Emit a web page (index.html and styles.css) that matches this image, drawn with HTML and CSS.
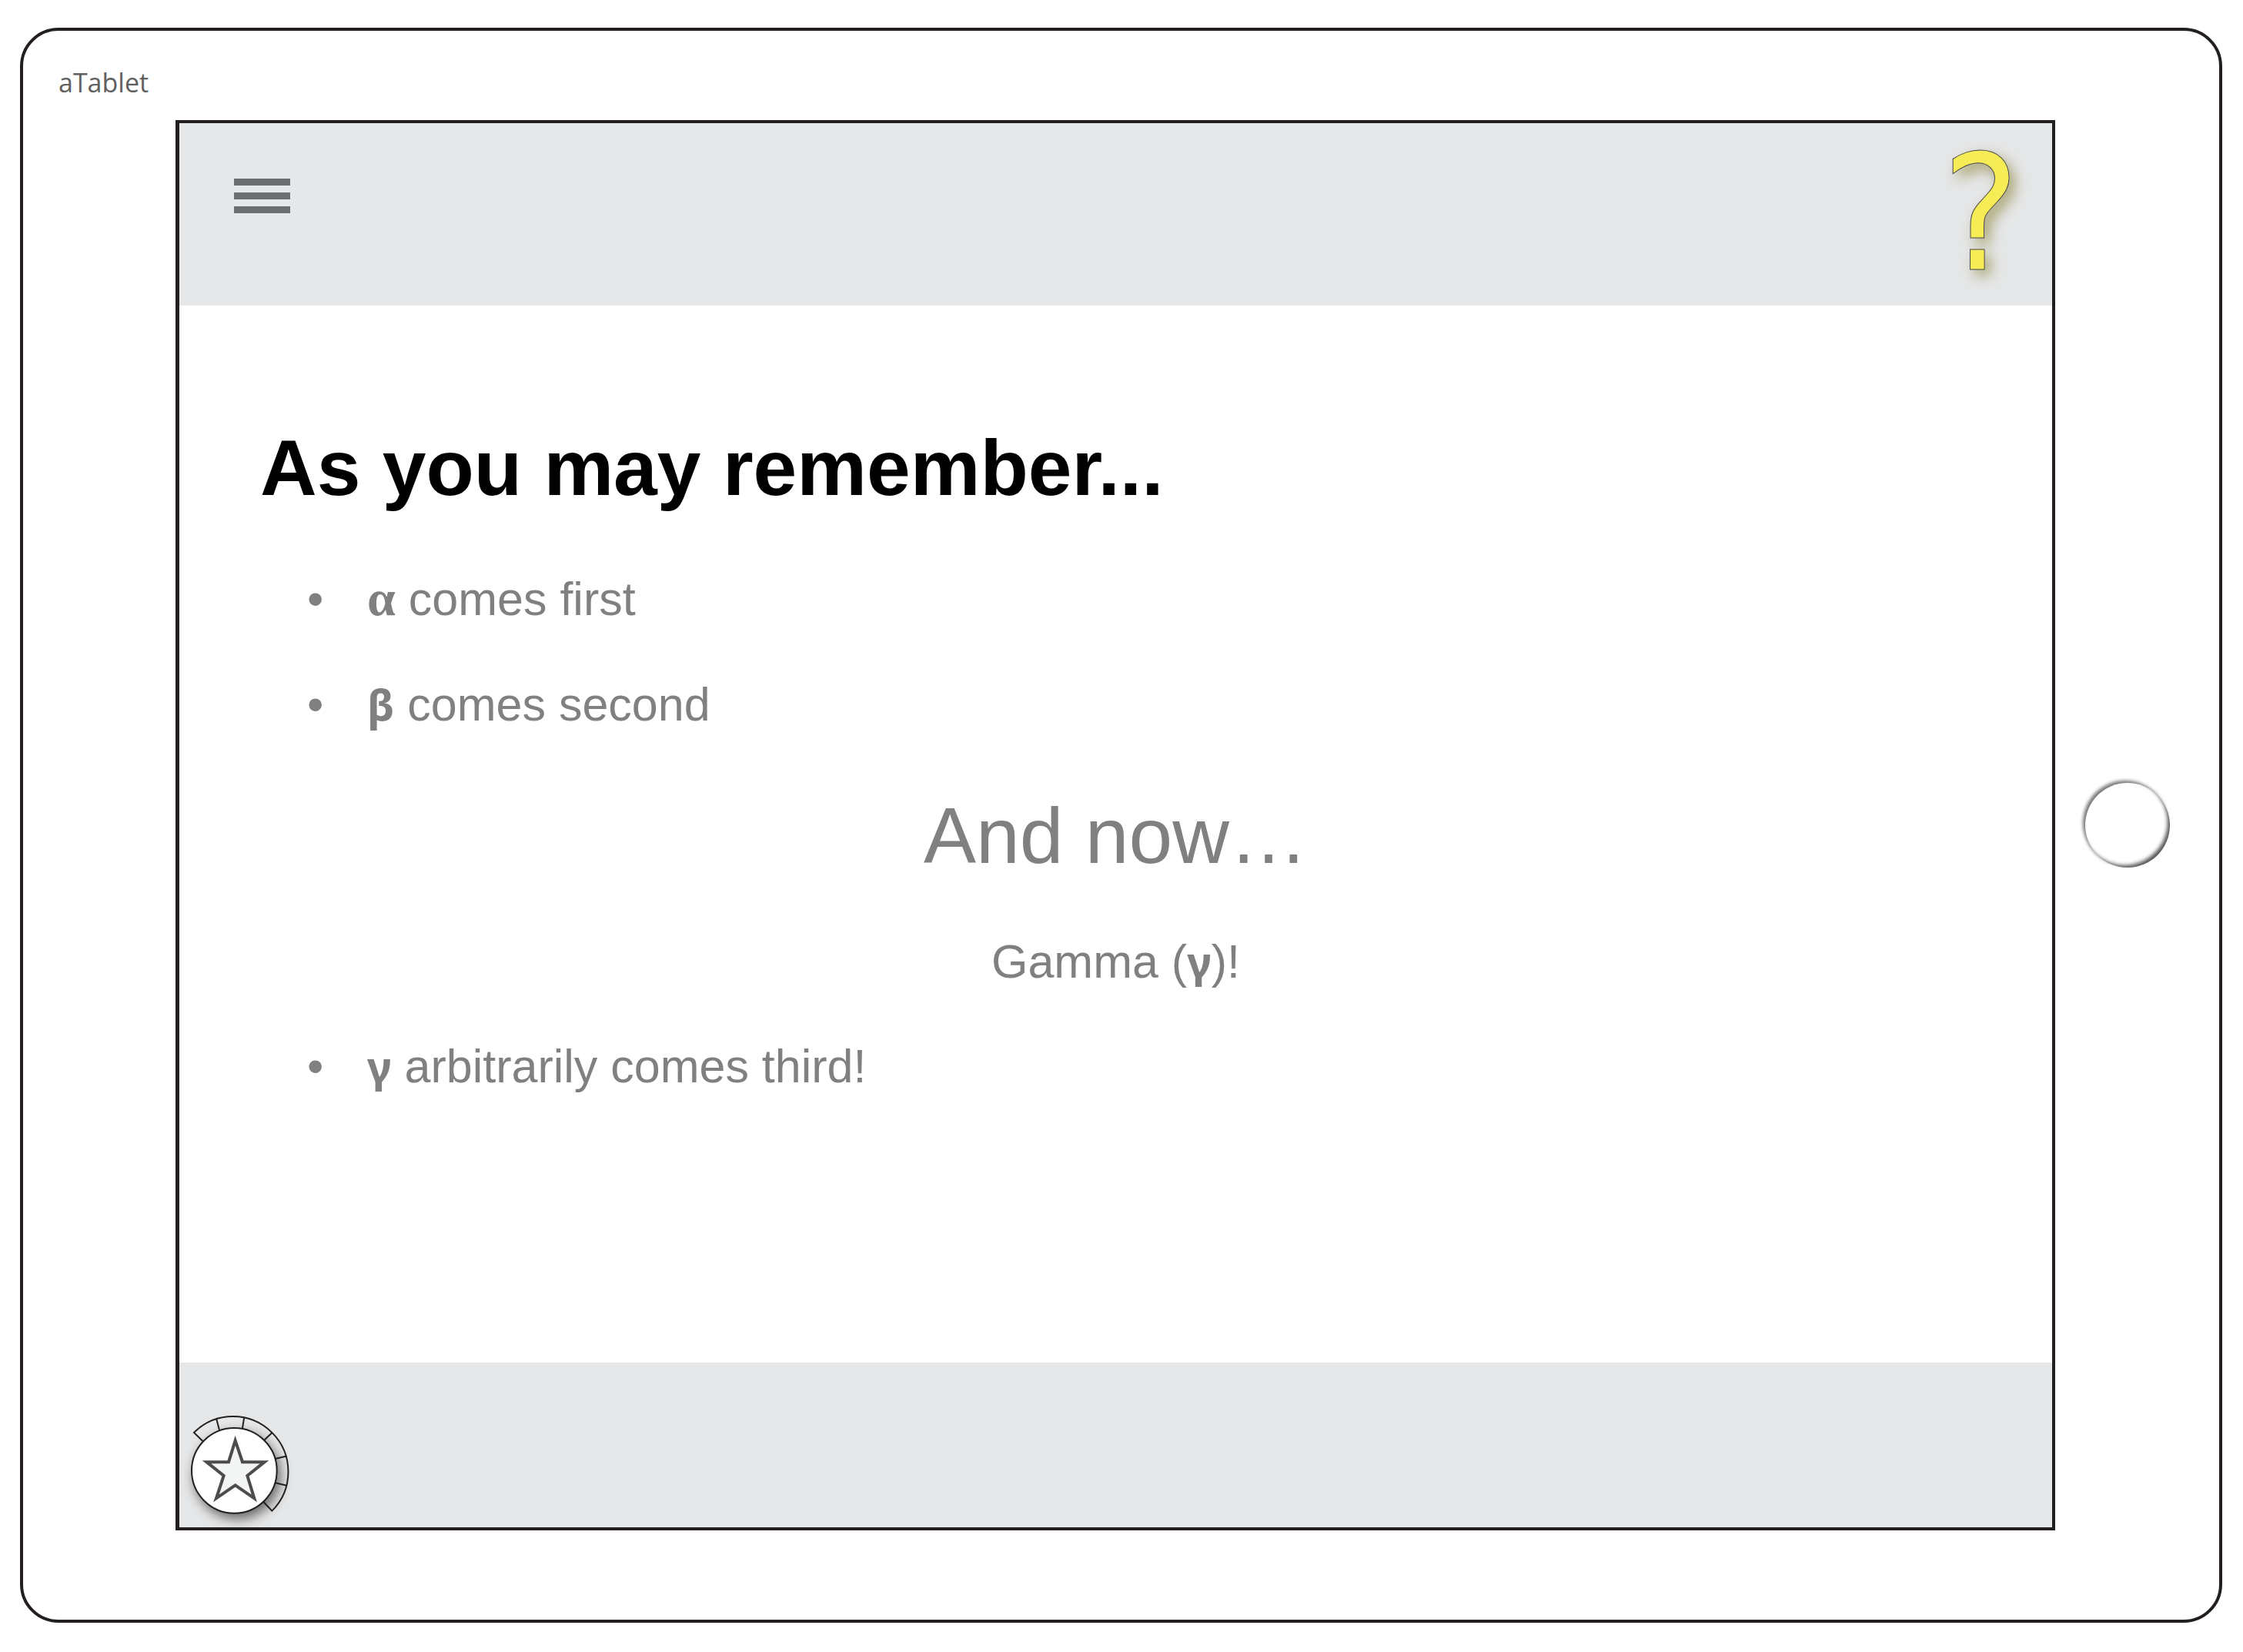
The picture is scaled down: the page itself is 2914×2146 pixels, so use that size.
FILE: index.html
```html
<!DOCTYPE html>
<html lang="en">
<head>
<meta charset="utf-8">
<title>aTablet</title>
<link rel="stylesheet" href="styles.css">
</head>
<body>
<div class="tablet">
  <div class="device-name">aTablet</div>
  <div class="screen">
    <header class="top-bar">
      <button class="menu-button" type="button" aria-label="Menu">
        <span class="menu-line"></span>
        <span class="menu-line"></span>
        <span class="menu-line"></span>
      </button>
      <button class="help-button" type="button">?</button>
    </header>
    <main class="lesson">
      <h1 class="title">As you may remember...</h1>
      <ul class="points">
        <li class="point"><b class="greek greek-serif">α</b> comes first</li>
        <li class="point"><b class="greek">β</b> comes second</li>
      </ul>
      <h2 class="subtitle">And now…</h2>
      <p class="reveal">Gamma (<b class="greek">γ</b>)!</p>
      <ul class="points">
        <li class="point"><b class="greek">γ</b> arbitrarily comes third!</li>
      </ul>
    </main>
    <footer class="bottom-bar">
      <button class="progress-button" type="button" aria-label="Progress">
        <svg class="progress-icon" viewBox="78 288 396 396">
          <circle class="disc" cx="253" cy="508" r="166"/>
          <path class="ring" d="M130 393L96 360A214 214 0 0 1 400 665L367 630M184 308L195 350M291 304L285 343M400 361L370 389M454 452L413 462M457 566L414 556"/>
          <path class="star" d="M257 391L285 474.5H371L304 528L331 616L257 565L183 616L212 528L145 474.5H231Z"/>
        </svg>
      </button>
    </footer>
  </div>
  <div class="bezel">
    <button class="home-button" type="button" aria-label="Home"></button>
  </div>
</div>
</body>
</html>
```
FILE: styles.css
```css
* {
  box-sizing: border-box;
}

body {
  margin: 0;
  padding: 36px 27px 36px 26px;
  background: #fff;
  color: #808080;
  font-family: "Liberation Sans", Arial, sans-serif;
}

button {
  margin: 0;
  padding: 0;
  border: 0;
  background: none;
  cursor: pointer;
}

.tablet {
  display: grid;
  grid-template-columns: minmax(0, 1fr) 187px;
  padding: 0 26px 116px 198px;
  border: 4px solid #231f20;
  border-radius: 50px;
}

.device-name {
  grid-column: 1 / -1;
  height: 116px;
  margin-left: -152px;
  padding-top: 43px;
  color: #606060;
  font-family: "Open Sans", "Noto Sans", sans-serif;
  font-size: 34px;
  line-height: 48px;
}

.screen {
  border: 4px solid #231f20;
  border-left-width: 5px;
}

.top-bar {
  display: flex;
  justify-content: space-between;
  align-items: flex-start;
  height: 237px;
  padding: 0 43px 0 71px;
  background: #e6e7e8;
}

.menu-button {
  display: flex;
  flex-direction: column;
  gap: 9px;
  margin-top: 72px;
}

.menu-line {
  width: 73px;
  height: 9px;
  background: #6d6e71;
}

.help-button {
  color: #f6ec55;
  font-family: "DejaVu Sans Condensed", "DejaVu Sans", sans-serif;
  font-size: 208px;
  line-height: 236px;
  text-shadow: 7px 8px 18px rgba(110, 100, 0, 0.55);
  -webkit-text-stroke: 1px #4d4b4c;
}

.lesson {
  padding: 151px 105px 349px;
}

.title,
.subtitle {
  margin: 0;
  font-size: 102px;
  line-height: 120px;
}

.title {
  margin-bottom: 74px;
  color: #000;
}

.subtitle {
  margin: 75px 0 67px;
  font-weight: 400;
  text-align: center;
}

.points {
  display: grid;
  gap: 65px;
  margin: 0;
  padding-left: 61px;
  list-style: none;
}

.point,
.reveal {
  font-size: 61px;
  line-height: 72px;
}

.point::before {
  content: "•";
  display: inline-block;
  width: 78px;
}

.reveal {
  margin: 0 0 64px;
  text-align: center;
}

.greek {
  font-family: "Noto Sans", sans-serif;
  font-size: 56px;
  line-height: 1;
}

.greek-serif {
  font-family: "Liberation Serif", serif;
  font-size: 66px;
}

.bottom-bar {
  padding: 67px 13px 15px;
  background: #e6e7e8;
}

.progress-button,
.progress-icon {
  display: block;
  width: 132px;
  height: 132px;
}

.progress-icon {
  overflow: visible;
}

.disc {
  fill: #fff;
  stroke: #231f20;
  stroke-width: 6;
  filter: drop-shadow(12px 20px 22px rgba(0, 0, 0, 0.55));
}

.ring {
  fill: none;
  stroke: #231f20;
  stroke-width: 6;
}

.star {
  fill: #f3f5f5;
  stroke: #4d4b4c;
  stroke-width: 12;
  stroke-miterlimit: 10;
}

.bezel {
  display: flex;
  align-items: center;
  justify-content: center;
}

.home-button {
  width: 110px;
  height: 110px;
  border-radius: 50%;
  background: #fff;
  box-shadow: -3px -3px 4px 0 #777, inset -4px -4px 5px -1px #555;
}
```
